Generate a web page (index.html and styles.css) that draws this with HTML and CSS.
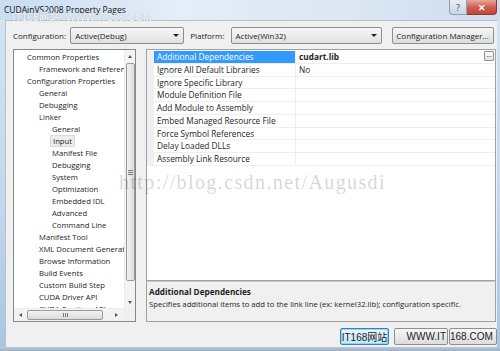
FILE: index.html
```html
<!doctype html>
<html lang="en">
<head>
  <meta charset="UTF-8">
  <title>CUDAinVS2008 Property Pages</title>
  <link rel="stylesheet" href="styles.css">
</head>
<body>
<div class="window">
  <div class="titlebar">
    <span class="title">CUDAinVS2008 Property Pages</span>
    <span class="mark-top">IT168网站&nbsp; WWW.IT168.COM</span>
    <div class="caption">
      <span class="cap-btn help">?</span>
      <span class="cap-btn close">&#x2715;</span>
    </div>
  </div>

  <div class="client">
    <div class="toolbar">
      <span class="label cfg-label">Configuration:</span>
      <div class="combo combo-config">Active(Debug)<span class="arrow"></span></div>
      <span class="label plat-label">Platform:</span>
      <div class="combo combo-platform">Active(Win32)<span class="arrow"></span></div>
      <div class="button cfg-manager">Configuration Manager...</div>
    </div>

    <div class="main">
      <div class="tree">
        <div class="tree-body">
          <ul class="tree-items">
            <li class="lv0">Common Properties</li>
            <li class="lv1">Framework and References</li>
            <li class="lv0">Configuration Properties</li>
            <li class="lv1">General</li>
            <li class="lv1">Debugging</li>
            <li class="lv1">Linker</li>
            <li class="lv2">General</li>
            <li class="lv2"><span class="selected">Input</span></li>
            <li class="lv2">Manifest File</li>
            <li class="lv2">Debugging</li>
            <li class="lv2">System</li>
            <li class="lv2">Optimization</li>
            <li class="lv2">Embedded IDL</li>
            <li class="lv2">Advanced</li>
            <li class="lv2">Command Line</li>
            <li class="lv1">Manifest Tool</li>
            <li class="lv1">XML Document Generator</li>
            <li class="lv1">Browse Information</li>
            <li class="lv1">Build Events</li>
            <li class="lv1">Custom Build Step</li>
            <li class="lv1">CUDA Driver API</li>
            <li class="lv1">CUDA Runtime API</li>
          </ul>
          <div class="vscroll">
            <span class="sb-arrow up"></span>
            <div class="vthumb"><span class="grip"></span></div>
            <span class="sb-arrow down"></span>
          </div>
        </div>
        <div class="hscroll-row">
          <div class="hscroll">
            <span class="sb-arrow left"></span>
            <div class="hthumb"><span class="hgrip"></span></div>
            <span class="sb-arrow right"></span>
          </div>
          <div class="corner"></div>
        </div>
      </div>

      <div class="right">
        <div class="grid">
          <div class="row">
            <span class="gutter"></span>
            <span class="name active">Additional Dependencies</span>
            <span class="value strong">cudart.lib<span class="ellipsis">...</span></span>
          </div>
          <div class="row"><span class="gutter"></span><span class="name">Ignore All Default Libraries</span><span class="value">No</span></div>
          <div class="row"><span class="gutter"></span><span class="name">Ignore Specific Library</span><span class="value"></span></div>
          <div class="row"><span class="gutter"></span><span class="name">Module Definition File</span><span class="value"></span></div>
          <div class="row"><span class="gutter"></span><span class="name">Add Module to Assembly</span><span class="value"></span></div>
          <div class="row"><span class="gutter"></span><span class="name">Embed Managed Resource File</span><span class="value"></span></div>
          <div class="row"><span class="gutter"></span><span class="name">Force Symbol References</span><span class="value"></span></div>
          <div class="row"><span class="gutter"></span><span class="name">Delay Loaded DLLs</span><span class="value"></span></div>
          <div class="row"><span class="gutter"></span><span class="name">Assembly Link Resource</span><span class="value"></span></div>
        </div>
        <div class="desc">
          <div class="desc-title">Additional Dependencies</div>
          <div class="desc-text">Specifies additional items to add to the link line (ex: kernel32.lib); configuration specific.</div>
        </div>
      </div>
    </div>

    <div class="footer">
      <div class="button ok">IT168网站</div>
      <div class="button cancel">WWW.IT</div>
      <div class="button apply">168.COM</div>
    </div>
  </div>
  <div class="frame-bottom"></div>
</div>
<div class="csdn-mark">http://blog.csdn.net/Augusdi</div>
</body>
</html>
```

FILE: styles.css
```css
*{
  box-sizing: border-box;
}

body{
  margin: 0;
  width: 500px;
  height: 351px;
  overflow: hidden;
  position: relative;
  font-family: "Open Sans", "Noto Sans", sans-serif;
  font-size: 8px;
  color: #1e1e1e;
}

.window{
  height: 351px;
  display: flex;
  flex-direction: column;
  background: linear-gradient(to bottom, #d6e4f3, #c3d6ec 60%, #aac4e2);
}

/* title bar */
.titlebar{
  height: 20px;
  position: relative;
  display: flex;
  align-items: flex-start;
  background: linear-gradient(to right, #cadcf0, #e4edf8 35%, #dce7f3 70%, #cfdcec);
}

.title{
  padding: 4px 0 0 4px;
  font-size: 8.5px;
  color: #111;
}

.mark-top{
  position: absolute;
  left: 12px;
  top: 9px;
  font-family: "Liberation Sans", "Noto Sans CJK SC", sans-serif;
  font-size: 10px;
  letter-spacing: 0.3px;
  color: #fff;
  text-shadow: 0 0 1px rgba(80,100,130,0.6);
}

.caption{
  margin-left: auto;
  margin-right: 3px;
  display: flex;
}

.cap-btn{
  height: 15px;
  display: flex;
  align-items: center;
  justify-content: center;
  border: 1px solid #8d9db3;
  border-top: 0;
}

.help{
  width: 18px;
  font-size: 9px;
  color: #445;
  background: linear-gradient(#e8eef6, #c9d6e6);
  border-radius: 0 0 0 4px;
}

.close{
  width: 30px;
  font-size: 9px;
  color: #fff;
  font-weight: bold;
  border-color: #8a3a34;
  border-left: 0;
  background: linear-gradient(#e6a79e, #cf5a4c 55%, #c2473b);
  border-radius: 0 0 4px 0;
}

/* client area */
.client{
  flex: 1;
  margin: 0 3px 0 5px;
  padding: 6px 0 0 7px;
  background: #f0f0f0;
  border-top: 1px solid #b3c2d3;
  border-left: 1px solid #b3c2d3;
}

.toolbar{
  height: 17px;
  display: flex;
  align-items: center;
}

.combo{
  position: relative;
  height: 17px;
  padding: 0 0 0 4px;
  display: flex;
  align-items: center;
  border: 1px solid #8e8f8f;
  border-radius: 2px;
  background: linear-gradient(#f7f7f7, #ececec 50%, #e0e0e0);
}

.combo-config{
  width: 114px;
  margin-left: 4px;
}

.plat-label{
  margin-left: 6px;
}

.combo-platform{
  width: 151px;
  margin-left: 6px;
}

.arrow{
  position: absolute;
  right: 4px;
  top: 6px;
  border-left: 3px solid transparent;
  border-right: 3px solid transparent;
  border-top: 3px solid #222;
}

.button{
  height: 17px;
  display: flex;
  align-items: center;
  justify-content: center;
  white-space: nowrap;
  border: 1px solid #8e8f8f;
  border-radius: 2px;
  background: linear-gradient(#f6f6f6, #eaeaea 50%, #dcdcdc);
}

.cfg-manager{
  width: 102px;
  margin-left: 10px;
}

/* main panels */
.main{
  margin-top: 5px;
  height: 273px;
  display: flex;
  gap: 10px;
}

.tree{
  width: 123px;
  display: flex;
  flex-direction: column;
  border: 1px solid #828790;
  background: #fff;
}

.tree-body{
  flex: 1;
  display: flex;
  overflow: hidden;
}

.tree-items{
  flex: 1;
  margin: 0;
  padding: 1px 0 0;
  list-style: none;
  white-space: nowrap;
  overflow: hidden;
  font-size: 7.7px;
}

.tree-items li{
  height: 12px;
  line-height: 12px;
}

.lv0{ padding-left: 13px; }
.lv1{ padding-left: 25px; }
.lv2{ padding-left: 38px; }

.selected{
  display: inline-block;
  margin-left: -2px;
  padding: 0 2px;
  height: 12px;
  background: #ececec;
  border: 1px solid #dadada;
  line-height: 10px;
}

.vscroll{
  width: 11px;
  display: flex;
  flex-direction: column;
  align-items: center;
  background: #f3f3f3;
  border-left: 1px solid #ececec;
}

.sb-arrow{
  display: block;
  width: 0;
  height: 0;
}

.sb-arrow.up{
  margin: 5px 0 5px;
  border-left: 2.5px solid transparent;
  border-right: 2.5px solid transparent;
  border-bottom: 3px solid #555;
}

.sb-arrow.down{
  margin: 8px 0 4px;
  border-left: 2.5px solid transparent;
  border-right: 2.5px solid transparent;
  border-top: 3px solid #555;
}

.vthumb{
  flex: 1;
  width: 9px;
  margin-bottom: 12px;
  display: flex;
  align-items: center;
  justify-content: center;
  border: 1px solid #9a9a9a;
  border-radius: 2px;
  background: linear-gradient(to right, #f2f2f2, #dcdcdc);
}

.grip{
  width: 5px;
  height: 5px;
  background: repeating-linear-gradient(#777 0 1px, transparent 1px 2px);
}

.hscroll-row{
  height: 13px;
  display: flex;
}

.hscroll{
  flex: 1;
  display: flex;
  align-items: center;
  background: #f3f3f3;
  border-top: 1px solid #ececec;
}

.sb-arrow.left{
  margin: 0 5px 0 5px;
  border-top: 2.5px solid transparent;
  border-bottom: 2.5px solid transparent;
  border-right: 3px solid #555;
}

.sb-arrow.right{
  margin: 0 4px 0 12px;
  border-top: 2.5px solid transparent;
  border-bottom: 2.5px solid transparent;
  border-left: 3px solid #555;
}

.hthumb{
  width: 76px;
  height: 10px;
  display: flex;
  align-items: center;
  justify-content: center;
  border: 1px solid #9a9a9a;
  border-radius: 2px;
  background: linear-gradient(#f2f2f2, #dcdcdc);
}

.hgrip{
  width: 5px;
  height: 4px;
  background: repeating-linear-gradient(to right, #777 0 1px, transparent 1px 2px);
}

.corner{
  width: 12px;
  background: #f0f0f0;
}

.right{
  flex: 1;
  display: flex;
  flex-direction: column;
  margin-right: 1px;
}

.grid{
  height: 232px;
  padding-top: 1px;
  border: 1px solid #a0a0a0;
  background: #fff;
}

.row{
  height: 12.75px;
  display: flex;
  border-bottom: 1px solid #efefef;
}

.gutter{
  width: 7px;
  background: #eef0f4;
}

.name{
  width: 142px;
  padding-left: 3px;
  font-size: 8.3px;
  line-height: 11.75px;
  white-space: nowrap;
  border-right: 1px solid #efefef;
}

.name.active{
  background: #3399ff;
  color: #fff;
}

.value{
  flex: 1;
  position: relative;
  padding-left: 3px;
  font-size: 8.3px;
  line-height: 11.75px;
}

.strong{
  font-weight: bold;
}

.ellipsis{
  position: absolute;
  right: 1px;
  top: 0;
  width: 10px;
  height: 10px;
  font-size: 7px;
  font-weight: normal;
  line-height: 6px;
  text-align: center;
  border: 1px solid #8e8f8f;
  border-radius: 1px;
  background: linear-gradient(#fafafa, #e4e4e4);
}

.desc{
  flex: 1;
  padding: 3px 2px 0;
  border: 1px solid #a0a0a0;
  border-top-color: #c8c8c8;
  background: #f0f0f0;
}

.desc-title{
  font-size: 8.2px;
  font-weight: bold;
  height: 13px;
  line-height: 13px;
}

.desc-text{
  font-size: 7.7px;
  height: 13px;
  line-height: 13px;
}

/* dialog buttons, watermark printed over them */
.footer{
  margin-top: 6px;
  display: flex;
  justify-content: flex-end;
  font-family: "Liberation Sans", "Noto Sans CJK SC", sans-serif;
  font-size: 10px;
}

.footer .button{
  height: 17px;
  color: #222;
  overflow: visible;
}

.ok{
  width: 49px;
  border-color: #3c7fb1;
  background: linear-gradient(#eaf6fd, #d9f0fc 50%, #bee6fd);
  box-shadow: inset 0 0 0 1px #8ed6f7;
}

.cancel{
  width: 54px;
  margin-left: 5px;
  justify-content: flex-end;
  padding-right: 1px;
}

.apply{
  width: 48px;
  margin-left: 1px;
  justify-content: flex-start;
}

.frame-bottom{
  height: 4px;
  background: linear-gradient(#bac8d8, #9fb1c6);
}

.csdn-mark{
  position: absolute;
  left: 119px;
  top: 171px;
  font-family: "Liberation Serif", serif;
  font-size: 20px;
  letter-spacing: 1.4px;
  color: rgba(0,0,0,0.18);
  pointer-events: none;
}
```
